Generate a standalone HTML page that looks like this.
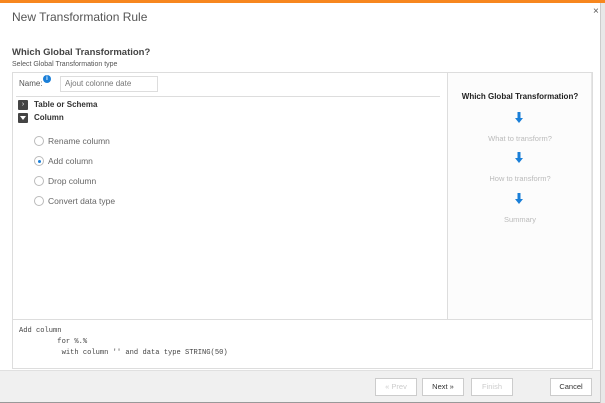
<!DOCTYPE html>
<html><head><style>
*{margin:0;padding:0;box-sizing:border-box}
body{width:605px;height:403px;overflow:hidden;background:#fff;font-family:"Liberation Sans",sans-serif;position:relative;color:#333}
.abs{position:absolute}
.radio{position:absolute;width:10px;height:10px;border:1px solid #bbb;border-radius:50%;background:#fff}
.lbl{position:absolute;font-size:8.5px;color:#666}
.btn{position:absolute;top:378px;height:18px;border:1px solid #ccc;background:#fff;font-size:7.5px;text-align:center;line-height:16px;color:#333}
.arrow{position:absolute;left:515px;width:8px;height:12px}
.step{position:absolute;left:448px;width:144px;text-align:center;font-size:7.5px;color:#bbb}
</style></head><body>
<div class="abs" style="left:0;top:0;width:605px;height:3px;background:#f7871f"></div>
<div class="abs" style="left:600px;top:3px;width:5px;height:400px;background:#e8e8e8;border-left:1px solid #ccc"></div>
<div class="abs" style="left:593px;top:6px;font-size:10px;color:#555">×</div>
<div class="abs" style="left:12px;top:10px;font-size:12px;color:#555">New Transformation Rule</div>
<div class="abs" style="left:12px;top:47px;font-size:9.5px;font-weight:bold;color:#444">Which Global Transformation?</div>
<div class="abs" style="left:12px;top:61px;font-size:7px;color:#555">Select Global Transformation type</div>
<div class="abs" style="left:12px;top:72px;width:581px;height:297px;border:1px solid #ddd;background:#fff"></div>
<div class="abs" style="left:447px;top:73px;width:145px;height:246px;border-left:1px solid #ddd;border-right:1px solid #e6e6e6;background:#fcfcfc"></div>
<div class="abs" style="left:13px;top:319px;width:579px;height:1px;background:#ddd"></div>
<div class="abs" style="left:19px;top:79px;font-size:8px;color:#555">Name:</div>
<div class="abs" style="left:43px;top:75px;width:8px;height:8px;border-radius:50%;background:#1a7fd8;color:#fff;font-size:6px;font-weight:bold;text-align:center;line-height:8px">i</div>
<div class="abs" style="left:60px;top:76px;width:98px;height:16px;border:1px solid #ddd;font-size:8px;color:#777;padding-left:4px;line-height:14px">Ajout colonne date</div>
<div class="abs" style="left:16px;top:96px;width:424px;height:1px;background:#ddd"></div>
<div class="abs" style="left:18px;top:100px;width:10px;height:10px;background:#444;border-radius:1px;color:#fff;font-size:7px;text-align:center;line-height:10px">›</div>
<div class="abs" style="left:34px;top:100px;font-size:8px;font-weight:bold;color:#333">Table or Schema</div>
<div class="abs" style="left:18px;top:113px;width:10px;height:10px;background:#444;border-radius:1px"><div class="abs" style="left:2px;top:3px;border-left:3px solid transparent;border-right:3px solid transparent;border-top:4px solid #fff"></div></div>
<div class="abs" style="left:34px;top:113px;font-size:8px;font-weight:bold;color:#333">Column</div>
<div class="radio" style="left:34px;top:136px"></div><div class="lbl" style="left:48px;top:136px">Rename column</div>
<div class="radio" style="left:34px;top:156px"><div class="abs" style="left:3px;top:3px;width:3px;height:3px;border-radius:50%;background:#1a7fd8"></div></div><div class="lbl" style="left:48px;top:156px">Add column</div>
<div class="radio" style="left:34px;top:176px"></div><div class="lbl" style="left:48px;top:176px">Drop column</div>
<div class="radio" style="left:34px;top:196px"></div><div class="lbl" style="left:48px;top:196px">Convert data type</div>
<div class="step" style="top:92px;font-size:8px;font-weight:bold;color:#222">Which Global Transformation?</div>
<svg class="arrow" style="top:112px" viewBox="0 0 8 12"><rect x="2.5" y="0" width="3" height="7" fill="#1a7fd8"/><path d="M0 6h8l-4 5z" fill="#1a7fd8"/></svg>
<div class="step" style="top:134px">What to transform?</div>
<svg class="arrow" style="top:152px" viewBox="0 0 8 12"><rect x="2.5" y="0" width="3" height="7" fill="#1a7fd8"/><path d="M0 6h8l-4 5z" fill="#1a7fd8"/></svg>
<div class="step" style="top:174px">How to transform?</div>
<svg class="arrow" style="top:193px" viewBox="0 0 8 12"><rect x="2.5" y="0" width="3" height="7" fill="#1a7fd8"/><path d="M0 6h8l-4 5z" fill="#1a7fd8"/></svg>
<div class="step" style="top:215px">Summary</div>
<pre class="abs" style="left:19px;top:326px;font-family:'Liberation Mono',monospace;font-size:7.1px;line-height:11px;color:#444">Add column
         for %.%
          with column '' and data type STRING(50)</pre>
<div class="abs" style="left:0;top:370px;width:600px;height:33px;background:#f0f0f0;border-top:1px solid #e0e0e0;border-bottom:1px solid #999"></div>
<div class="btn" style="left:375px;width:42px;color:#ccc">« Prev</div>
<div class="btn" style="left:422px;width:42px">Next »</div>
<div class="btn" style="left:471px;width:42px;color:#ccc">Finish</div>
<div class="btn" style="left:550px;width:42px">Cancel</div>
</body></html>
